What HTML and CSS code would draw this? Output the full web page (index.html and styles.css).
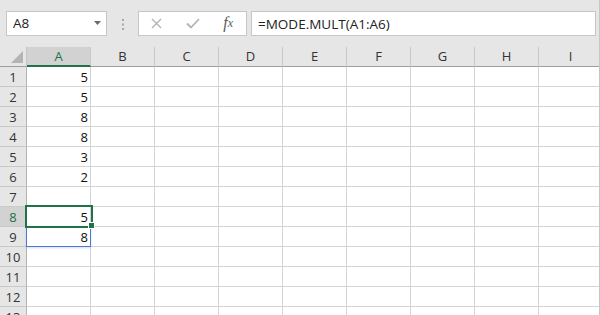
FILE: index.html
```html
<!DOCTYPE html>
<html lang="en">
<head>
  <meta charset="UTF-8">
  <meta name="viewport" content="width=device-width, initial-scale=1.0">
  <title>MODE.MULT</title>
  <link rel="stylesheet" href="styles.css">
</head>
<body>
  <div class="window">
    <div class="toolbar">
      <div class="namebox">
        <span>A8</span>
        <svg width="7" height="4" viewBox="0 0 7 4"><polygon points="0,0 7,0 3.5,4" fill="#6b6b6b"/></svg>
      </div>
      <div class="grip">
        <svg width="2" height="11" viewBox="0 0 2 11">
          <rect x="0" y="0" width="2" height="2" fill="#a8a8a8"/>
          <rect x="0" y="4.5" width="2" height="2" fill="#a8a8a8"/>
          <rect x="0" y="9" width="2" height="2" fill="#a8a8a8"/>
        </svg>
      </div>
      <div class="fx-buttons">
        <span class="fx-btn">
          <svg width="11" height="11" viewBox="0 0 11 11"><path d="M1 1 L10 10 M10 1 L1 10" stroke="#b3b3b3" stroke-width="1.4" fill="none"/></svg>
        </span>
        <span class="fx-btn">
          <svg width="14" height="11" viewBox="0 0 14 11"><path d="M1 5.5 L5 9.5 L13 1" stroke="#b3b3b3" stroke-width="1.8" fill="none"/></svg>
        </span>
        <span class="fx-btn fx-label">f<sub>x</sub></span>
      </div>
      <div class="formula">=MODE.MULT(A1:A6)</div>
    </div>

    <div id="sheet" class="sheet"></div>
  </div>

  <script>
    document.addEventListener('DOMContentLoaded', function() {
      const sheet = document.getElementById('sheet');
      const cols = ['A', 'B', 'C', 'D', 'E', 'F', 'G', 'H', 'I'];
      const values = { 1: 5, 2: 5, 3: 8, 4: 8, 5: 3, 6: 2, 8: 5, 9: 8 };
      const activeRow = 8;

      function add(className, text) {
        const div = document.createElement('div');
        div.className = className;
        if (text !== undefined) div.textContent = text;
        sheet.appendChild(div);
        return div;
      }

      // corner with the select-all triangle
      const corner = add('corner');
      corner.innerHTML = '<svg width="12" height="12" viewBox="0 0 12 12"><polygon points="12,0 12,12 0,12" fill="#b4b4b4"/></svg>';

      cols.forEach(function(col, i) {
        add(i === 0 ? 'ch selected' : 'ch', col);
      });

      for (let row = 1; row <= 13; row++) {
        add(row === activeRow ? 'rh selected' : 'rh', row);
        cols.forEach(function(col, i) {
          let cls = 'cell';
          if (i === 0 && row === activeRow) cls += ' active';
          if (i === 0 && row === activeRow + 1) cls += ' spill';
          add(cls, i === 0 && values[row] !== undefined ? values[row] : '');
        });
      }
    });
  </script>
</body>
</html>
```

FILE: styles.css
```css
body {
  margin: 0;
  background: #fff;
  font-family: "Open Sans", "Noto Sans", sans-serif;
  color: #222;
}
.window {
  width: 599px;
  height: 315px;
  overflow: hidden;
  border-right: 1px solid #c6c6c6;
}
.toolbar {
  display: flex;
  align-items: flex-start;
  height: 47px;
  box-sizing: border-box;
  padding: 11px 3px 0 6px;
  background: #e6e6e6;
}
.namebox {
  width: 101px;
  height: 25px;
  box-sizing: border-box;
  border: 1px solid #c6c6c6;
  background: #fff;
  display: flex;
  align-items: center;
  justify-content: space-between;
  padding: 0 5px 1px 6px;
  font-size: 13.5px;
}
.grip {
  width: 31px;
  display: flex;
  justify-content: center;
  padding-top: 8px;
}
.fx-buttons {
  width: 109px;
  height: 25px;
  box-sizing: border-box;
  border: 1px solid #c6c6c6;
  background: #fff;
  display: flex;
  align-items: center;
  padding-left: 0;
}
.fx-btn {
  width: 36px;
  display: flex;
  justify-content: center;
  align-items: center;
}
.fx-btn svg {
  display: block;
}
.fx-label {
  font-family: "Liberation Serif", serif;
  font-style: italic;
  font-size: 16px;
  color: #5a5a5a;
  line-height: 16px;
  padding-bottom: 2px;
}
.fx-label sub {
  font-size: 12px;
  vertical-align: -1px;
}
.formula {
  flex: 1;
  margin-left: 4px;
  height: 25px;
  box-sizing: border-box;
  border: 1px solid #c6c6c6;
  background: #fff;
  padding: 2px 0 0 6px;
  font-size: 13.5px;
  line-height: 20px;
}
.sheet {
  display: grid;
  grid-template-columns: 27px repeat(9, 64px);
  grid-auto-rows: 20px;
}
.sheet > div {
  box-sizing: border-box;
}
.corner {
  background: #e6e6e6;
  border-right: 1px solid #c6c6c6;
  border-bottom: 1px solid #9e9e9e;
  display: flex;
  justify-content: flex-end;
  align-items: flex-end;
  padding: 0 3px 3px 0;
}
.ch {
  background: #e6e6e6;
  border-right: 1px solid #c9c9c9;
  border-bottom: 1px solid #9e9e9e;
  text-align: center;
  font-size: 13px;
  line-height: 19px;
  color: #333;
}
.ch.selected {
  background: #d2d2d2;
  color: #217346;
  border-bottom: 2px solid #217346;
}
.rh {
  background: #e6e6e6;
  border-right: 1px solid #b4b4b4;
  border-bottom: 1px solid #c9c9c9;
  text-align: center;
  font-size: 13px;
  line-height: 17px;
  padding-top: 2px;
  color: #333;
}
.rh.selected {
  background: #d2d2d2;
  color: #217346;
}
.cell {
  border-right: 1px solid #d4d4d4;
  border-bottom: 1px solid #d4d4d4;
  text-align: right;
  padding: 2px 2px 0 0;
  font-size: 13px;
  line-height: 17px;
  color: #111;
}
.active,
.spill {
  position: relative;
}
.active::after {
  content: "";
  position: absolute;
  top: -2px;
  left: -2px;
  right: -3px;
  bottom: -2px;
  border: 2px solid #217346;
  z-index: 2;
}
.active::before {
  content: "";
  position: absolute;
  left: 61px;
  top: 15px;
  width: 5px;
  height: 5px;
  background: #217346;
  border: 1px solid #fff;
  z-index: 3;
}
.spill::after {
  content: "";
  position: absolute;
  top: -1px;
  left: -1px;
  right: -1px;
  bottom: -1px;
  border: 1px solid #4a7bd0;
  border-top: none;
  box-shadow: 0 1px 2px rgba(74, 123, 208, 0.25);
  z-index: 1;
}
```
